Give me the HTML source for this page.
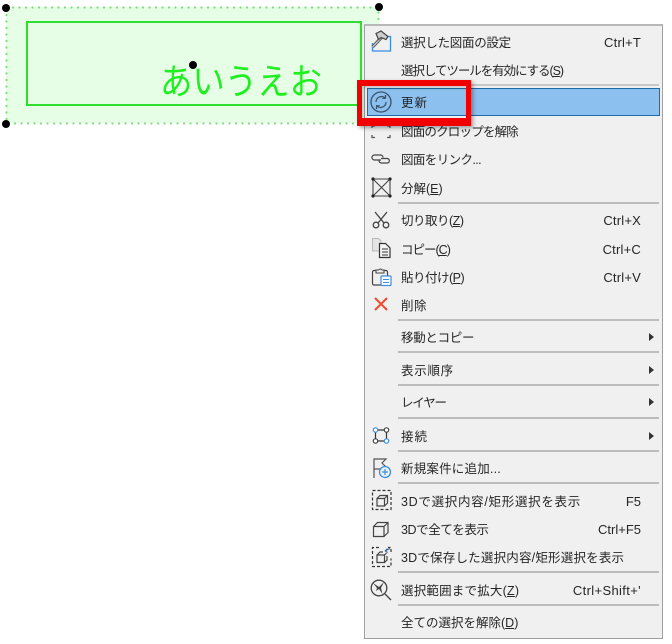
<!DOCTYPE html>
<html lang="ja">
<head>
<meta charset="utf-8">
<style>
html,body{margin:0;padding:0;background:#fff;}
#p{position:relative;width:672px;height:644px;overflow:hidden;background:#fff;font-family:"Liberation Sans","Noto Sans CJK JP",sans-serif;}
.a{position:absolute;}
.t{position:absolute;left:401px;margin-top:1px;font-size:12.5px;line-height:16px;color:#262626;white-space:nowrap;}
.s{position:absolute;right:31px;margin-top:1px;font-size:13px;line-height:16px;color:#262626;white-space:nowrap;}
.sep{position:absolute;left:398px;width:261px;height:2px;background:#bcbcbc;}
.arr{position:absolute;left:649px;width:0;height:0;border-left:5px solid #333;border-top:4px solid transparent;border-bottom:4px solid transparent;}
.h{position:absolute;width:8px;height:8px;border-radius:50%;background:#000;}
u{text-underline-offset:1px;}
</style>
</head>
<body>
<div id="p">
<!-- green drawing -->
<div class="a" style="left:6px;top:7px;width:373px;height:116px;background:#e6fde6;"></div>
<svg class="a" style="left:0;top:0;" width="400" height="130" viewBox="0 0 400 130" fill="none">
  <rect x="6.500" y="7.500" width="372" height="116" stroke="#7fdc7f" stroke-width="2.200" stroke-linecap="round" stroke-dasharray="0 6.500"/>
</svg>
<div class="a" style="left:26px;top:21px;width:336px;height:85px;box-sizing:border-box;border:2px solid #2ee02e;"></div>
<div class="a" style="left:160px;top:53px;font-size:36px;line-height:52px;color:#1fee1f;font-family:'Noto Sans CJK JP',sans-serif;font-weight:400;white-space:nowrap;transform:scaleX(.9);transform-origin:0 0;">あいうえお</div>
<div class="h" style="left:2px;top:4px;"></div>
<div class="h" style="left:375px;top:3px;"></div>
<div class="h" style="left:2px;top:120px;"></div>
<div class="h" style="left:189px;top:61px;"></div>

<!-- menu -->
<div class="a" style="left:364px;top:24px;width:299px;height:615px;box-sizing:border-box;background:#f0f0f0;border:1px solid #a0a0a0;border-top:2px solid #b8b8b8;"></div>

<div class="sep" style="top:84px;background:#c8c8c8;"></div>
<div class="sep" style="top:202px;"></div>
<div class="sep" style="top:319px;"></div>
<div class="sep" style="top:351px;"></div>
<div class="sep" style="top:384px;"></div>
<div class="sep" style="top:417px;"></div>
<div class="sep" style="top:450px;"></div>
<div class="sep" style="top:482px;"></div>
<div class="sep" style="top:571px;"></div>
<div class="sep" style="top:604px;"></div>

<!-- highlight -->
<div class="a" style="left:367px;top:88px;width:293px;height:28px;box-sizing:border-box;background:#8cc0ee;border:1px solid #1f6aa8;"></div>

<div class="t" style="top:34px;letter-spacing:-.3px;">選択した図面の設定</div><div class="s" style="top:34px;letter-spacing:.2px;">Ctrl+T</div>
<div class="t" style="top:62px;letter-spacing:-1.06px;">選択してツールを有効にする(<u>S</u>)</div>
<div class="t" style="top:94px;letter-spacing:1px;">更新</div>
<div class="t" style="top:123px;letter-spacing:-.8px;">図面のクロップを解除</div>
<div class="t" style="top:151px;letter-spacing:-.6px;">図面をリンク...</div>
<div class="t" style="top:180px;">分解(<u>E</u>)</div>
<div class="t" style="top:212px;letter-spacing:-.5px;">切り取り(<u>Z</u>)</div><div class="s" style="top:212px;letter-spacing:.2px;">Ctrl+X</div>
<div class="t" style="top:241px;letter-spacing:-1px;">コピー(<u>C</u>)</div><div class="s" style="top:241px;letter-spacing:.2px;">Ctrl+C</div>
<div class="t" style="top:269px;letter-spacing:-.5px;">貼り付け(<u>P</u>)</div><div class="s" style="top:269px;letter-spacing:.2px;">Ctrl+V</div>
<div class="t" style="top:297px;letter-spacing:.5px;">削除</div>
<div class="t" style="top:329px;letter-spacing:-.3px;">移動とコピー</div><div class="arr" style="top:333px;"></div>
<div class="t" style="top:362px;letter-spacing:.7px;">表示順序</div><div class="arr" style="top:366px;"></div>
<div class="t" style="top:394px;letter-spacing:-1.2px;">レイヤー</div><div class="arr" style="top:398px;"></div>
<div class="t" style="top:428px;letter-spacing:1px;">接続</div><div class="arr" style="top:432px;"></div>
<div class="t" style="top:460px;letter-spacing:.2px;">新規案件に追加...</div>
<div class="t" style="top:493px;letter-spacing:.7px;">3Dで選択内容/矩形選択を表示</div><div class="s" style="top:493px;">F5</div>
<div class="t" style="top:521px;letter-spacing:-.4px;">3Dで全てを表示</div><div class="s" style="top:521px;">Ctrl+F5</div>
<div class="t" style="top:549px;letter-spacing:.2px;">3Dで保存した選択内容/矩形選択を表示</div>
<div class="t" style="top:582px;letter-spacing:.2px;">選択範囲まで拡大(<u>Z</u>)</div><div class="s" style="top:582px;letter-spacing:.35px;">Ctrl+Shift+'</div>
<div class="t" style="top:614px;">全ての選択を解除(<u>D</u>)</div>

<!-- icons -->
<svg class="a" style="left:0;top:0;" width="672" height="644" viewBox="0 0 672 644" fill="none">
  <!-- hammer / settings -->
  <path d="M372.500 43v8h18V36.500h-5" stroke="#3b8de0" stroke-width="1.300"/>
  <path d="M372.500 47l9-9.500" stroke="#555" stroke-width="3.200"/>
  <path d="M372.500 47l9-9.500" stroke="#c8c8c8" stroke-width="1.300"/>
  <path d="M376 33.500l5-2.500 7 5.500-2 3-5-2-2.500 2z" fill="#ccc" stroke="#444" stroke-width="1.200"/>
  <!-- refresh -->
  <circle cx="381" cy="102" r="10" stroke="#3a5268" stroke-width="1.300"/>
  <path d="M376 102a5.500 5.500 0 0 1 9-4.200M385.500 95v3.300h-3.300M386 102a5.500 5.500 0 0 1-9 4.200M376.500 109v-3.300h3.300" stroke="#3a5268" stroke-width="1.200"/>
  <!-- crop -->
  <path d="M372 128v-2h3M387 126h3v2M372 135v2.500h3M390 135v2.500h-3" stroke="#555" stroke-width="1.300"/>
  <!-- link -->
  <path d="M381 160h-6.500a2.500 2.500 0 0 1 0-5h6a2.500 2.500 0 0 1 2.500 2.500M381 158.500h6.500a2.300 2.300 0 0 1 0 4.500h-6a2.400 2.400 0 0 1-2.500-2.500" stroke="#444" stroke-width="1.200"/>
  <!-- explode -->
  <path d="M373 179h17v17h-17zM373 179l17 17M390 179l-17 17" stroke="#444" stroke-width="1.100"/>
  <circle cx="373" cy="179" r="1.600" fill="#222"/><circle cx="390" cy="179" r="1.600" fill="#222"/><circle cx="373" cy="196" r="1.600" fill="#222"/><circle cx="390" cy="196" r="1.600" fill="#222"/>
  <!-- scissors -->
  <path d="M387 212l-9 11M375 212l9 11" stroke="#444" stroke-width="1.300"/>
  <circle cx="376" cy="225" r="2.800" stroke="#444" stroke-width="1.300"/><circle cx="386" cy="225" r="2.800" stroke="#444" stroke-width="1.300"/>
  <!-- copy -->
  <path d="M372.500 238.500h6l2.500 2.500v10h-8.500z" fill="#e4e4e4" stroke="#b8b8b8"/>
  <path d="M379.500 243.500h6l4.500 4.500v9.500h-10.500z" fill="#f4f4f4" stroke="#333" stroke-width="1.200"/>
  <path d="M382 249h6M382 252h6M382 255h6" stroke="#333"/>
  <!-- paste -->
  <rect x="372.500" y="270.500" width="15" height="14.500" rx="1.500" stroke="#444" stroke-width="1.200"/>
  <path d="M376 273v-3h2.500a2 2 0 0 1 3.500 0h2v3z" stroke="#444" fill="#f0f0f0"/>
  <rect x="381" y="276" width="10" height="9.500" rx="1" fill="#fff" stroke="#3b8de0" stroke-width="1.200"/>
  <path d="M383 279.500h6M383 282.500h6" stroke="#3b8de0"/>
  <!-- delete -->
  <path d="M375 298l12 12M387 298l-12 12" stroke="#f0492b" stroke-width="2"/>
  <!-- connect -->
  <path d="M378 430h6M378 441h6M375.500 432v7M386.500 432v7" stroke="#333" stroke-width="1.200"/>
  <circle cx="375.500" cy="430" r="2.200" fill="#fff" stroke="#3b8de0" stroke-width="1.200"/>
  <circle cx="386.500" cy="430" r="2.200" fill="#fff" stroke="#444" stroke-width="1.200"/>
  <circle cx="375.500" cy="441" r="2.200" fill="#fff" stroke="#444" stroke-width="1.200"/>
  <circle cx="386.500" cy="441" r="2.200" fill="#fff" stroke="#3b8de0" stroke-width="1.200"/>
  <!-- new project -->
  <path d="M374 478v-19h12l-4 4 4 4M374 469h6" stroke="#555" stroke-width="1.200"/>
  <circle cx="385" cy="472" r="5.500" fill="#f0f0f0" stroke="#3b8de0" stroke-width="1.300"/>
  <path d="M382 472h6M385 469v6" stroke="#3b8de0" stroke-width="1.200"/>
  <!-- 3D selected -->
  <rect x="372.500" y="490.500" width="18.500" height="19" stroke="#333" stroke-width="1.200" stroke-dasharray="3 2"/>
  <path d="M377 498.500h7.500v7.500h-7.500zM377 498.500l3-3h7.500v7.500l-3 3M384.500 498.500l3-3" stroke="#444" stroke-width="1.200"/>
  <!-- 3D all -->
  <path d="M373.500 526.500h10.500v10h-10.500zM373.500 526.500l4-4h10.500v10l-4 4M384 526.500l4-4" stroke="#444" stroke-width="1.200"/>
  <!-- 3D saved -->
  <path d="M379 547.500h-6.500v19h18.500v-8M391 552v-4.500h-3" stroke="#333" stroke-width="1.200" stroke-dasharray="3 2"/>
  <path d="M377 555h7.500v7.500h-7.500zM377 555l3-3h3M384.500 555l2-2M384.500 562.500l2.500-2.500v-4" stroke="#444" stroke-width="1.200"/>
  <path d="M385 551l5-2.500M385 551l2.500-2.500M385 551l2.800 1.500" stroke="#3b6da0" stroke-width="1"/>
  <!-- zoom -->
  <circle cx="379" cy="588" r="7.800" stroke="#444" stroke-width="1.300"/>
  <path d="M385 594l6 6" stroke="#444" stroke-width="1.300"/>
  <path d="M373 583l6 4 5-5-3 6 1.500 6-3.500-5-3 2 1-3z" fill="#444"/>
</svg>

<!-- red box -->
<div class="a" style="left:357px;top:80px;width:114px;height:46px;box-sizing:border-box;border-style:solid;border-color:#f00000;border-width:6px 5px 8px 5px;box-shadow:2px 2px 4px rgba(0,0,0,.35), inset 2px 2px 3px rgba(0,0,0,.2);"></div>
</div>
</body>
</html>
